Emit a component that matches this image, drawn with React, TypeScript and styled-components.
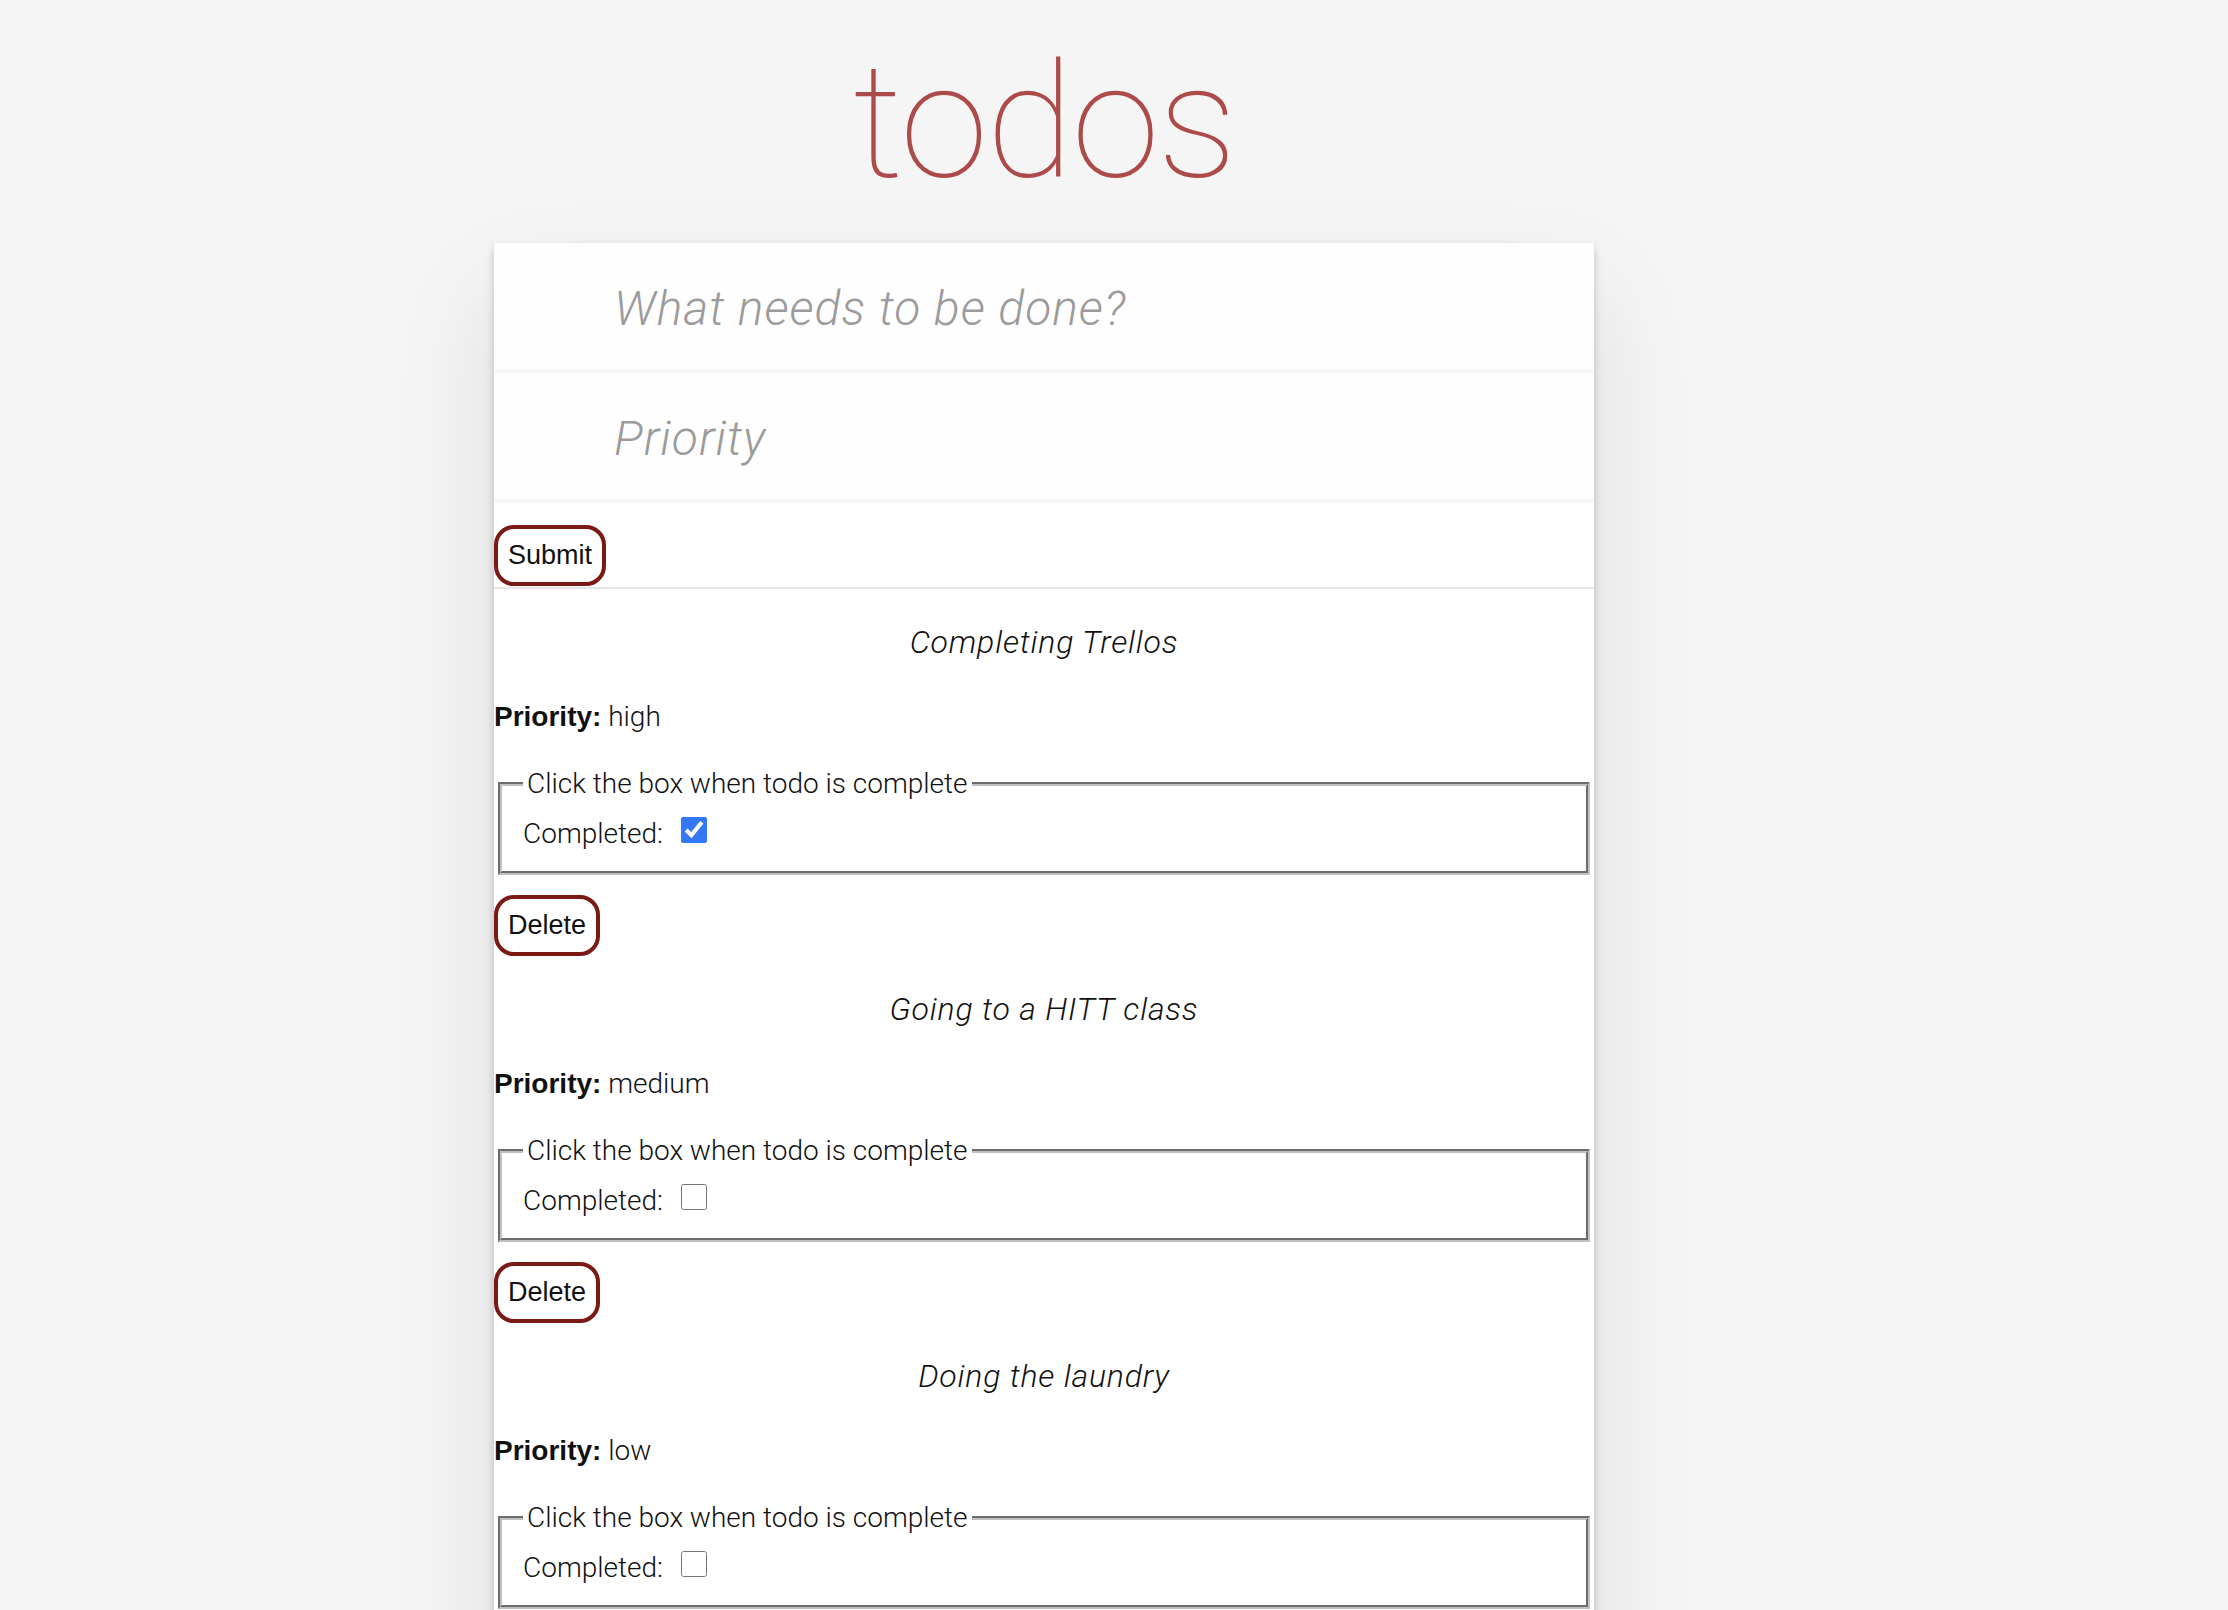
import styled, { createGlobalStyle } from "styled-components";

const GlobalStyle = createGlobalStyle`
  html, body {
    margin: 0;
    padding: 0;
  }
  body {
    background: #f5f5f5;
    color: #111;
    font-family: Roboto, "Liberation Sans", Arial, sans-serif;
    font-weight: 300;
    font-size: 28px;
    line-height: 40px;
  }
`;

type Todo = {
  title: string;
  priority: string;
  completed: boolean;
};

const todos: Todo[] = [
  { title: "Completing Trellos", priority: "high", completed: true },
  { title: "Going to a HITT class", priority: "medium", completed: false },
  { title: "Doing the laundry", priority: "low", completed: false },
];

const App = () => {
  return (
    <>
      <GlobalStyle />
      <Page>
        <Title>todos</Title>
        <Card>
          <form onSubmit={(e) => e.preventDefault()}>
            <NewTodo placeholder="What needs to be done?" />
            <NewTodo placeholder="Priority" />
            <SubmitRow>
              <RedButton type="submit">Submit</RedButton>
            </SubmitRow>
          </form>
          <List>
            {todos.map((todo) => (
              <Item key={todo.title}>
                <TodoTitle>{todo.title}</TodoTitle>
                <PriorityLine>
                  <strong>Priority:</strong> {todo.priority}
                </PriorityLine>
                <Box>
                  <Legend>Click the box when todo is complete</Legend>
                  <label>
                    Completed: <Check type="checkbox" defaultChecked={todo.completed} />
                  </label>
                </Box>
                <RedButton type="button">Delete</RedButton>
              </Item>
            ))}
          </List>
        </Card>
      </Page>
    </>
  );
};

export default App;

const Page = styled.div`
  width: 1100px;
  margin-left: 494px;
  padding-top: 42px;
`;

const Title = styled.h1`
  margin: 0 0 41px;
  font-family: Roboto, "Liberation Sans", sans-serif;
  font-weight: 100;
  font-size: 160px;
  line-height: 160px;
  text-align: center;
  color: #ad4a4a;
  letter-spacing: -2px;
`;

const Card = styled.section`
  background: #fff;
  box-shadow: 0 4px 8px rgba(0, 0, 0, 0.2), 0 50px 100px rgba(0, 0, 0, 0.1);
`;

const NewTodo = styled.input`
  display: block;
  width: 100%;
  box-sizing: border-box;
  margin: 0;
  padding: 32px 32px 32px 120px;
  border: none;
  outline: none;
  font-family: Roboto, "Liberation Sans", Arial, sans-serif;
  font-weight: 300;
  font-size: 48px;
  letter-spacing: 1px;
  line-height: 66px;
  height: 130px;
  color: #4d4d4d;
  background: rgba(0, 0, 0, 0.003);
  box-shadow: inset 0 -4px 2px rgba(0, 0, 0, 0.03);

  &::placeholder {
    font-style: italic;
    font-weight: 300;
    color: #9b9b9b;
  }
`;

const SubmitRow = styled.div`
  padding: 22px 0 1px;
`;

const RedButton = styled.button`
  display: block;
  margin: 0;
  padding: 11px 10px;
  border: 4px solid #7b1a14;
  border-radius: 20px;
  background: #fff;
  color: #111;
  font-family: "Liberation Sans", Arial, sans-serif;
  font-weight: 400;
  font-size: 27px;
  line-height: 31px;
  cursor: pointer;
`;

const List = styled.div`
  border-top: 2px solid #e6e6e6;
`;

const Item = styled.div`
  padding-bottom: 0;
`;

const TodoTitle = styled.p`
  margin: 33px 0 35px;
  font-size: 32px;
  font-style: italic;
  letter-spacing: 0.8px;
  line-height: 40px;
  text-align: center;
`;

const PriorityLine = styled.p`
  margin: 0 0 27px;

  strong {
    font-family: "Liberation Sans", Arial, sans-serif;
    font-weight: 700;
  }
`;

const Box = styled.fieldset`
  margin: 0 4px 20px;
  padding: 10px 21px 17px;
  border: 4px groove #c0c0c0;
`;

const Legend = styled.legend`
  padding: 0 4px;
`;

const Check = styled.input`
  width: 26px;
  height: 26px;
  margin: 0 0 0 11px;
  vertical-align: baseline;
  accent-color: #3478f6;
`;
